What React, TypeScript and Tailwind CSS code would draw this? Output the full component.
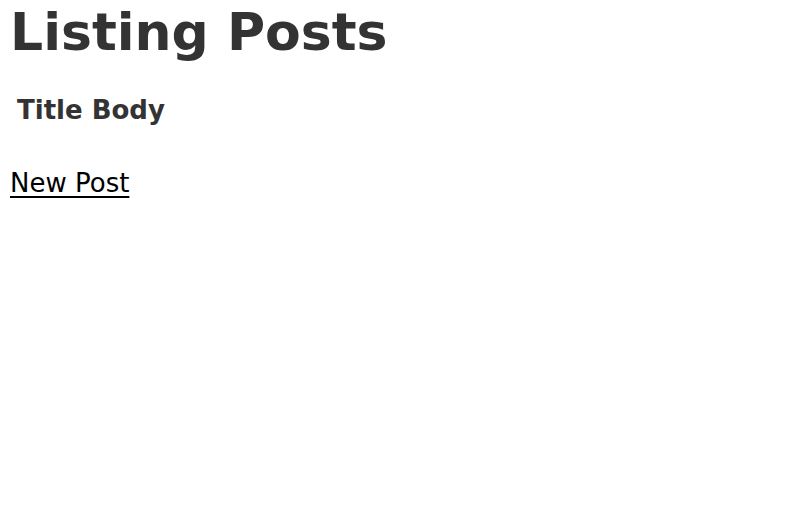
export default function App() {
  return (
    <div className="min-h-screen bg-white px-[10px] pt-[1px] text-[#333] font-['DejaVu_Sans',Verdana,sans-serif]">
      <h1 className="mt-[1px] text-[52px] font-bold leading-[60px]">Listing Posts</h1>

      <table className="mt-[30px]">
        <thead>
          <tr>
            <th className="pl-[7px] text-left text-[26px] font-bold leading-[36px]">Title Body</th>
          </tr>
        </thead>
      </table>

      <a href="#" className="mt-[37px] inline-block text-[26px] leading-[36px] text-black underline underline-offset-[4px] decoration-[2px]">
        New Post
      </a>
    </div>
  );
}
